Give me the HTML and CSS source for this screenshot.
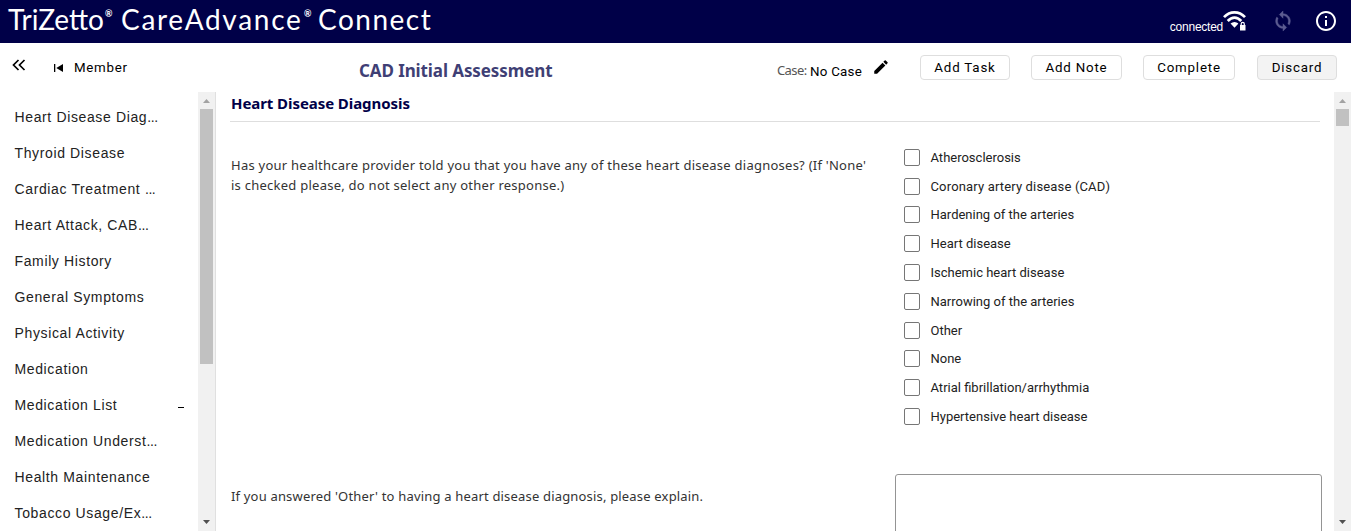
FILE: index.html
```html
<!DOCTYPE html>
<html lang="en">
<head>
<meta charset="utf-8">
<title>CareAdvance Connect</title>
<link rel="stylesheet" href="styles.css">
</head>
<body>
<header class="topbar">
  <div class="brand"><span class="b1">TriZetto</span><sup>®</sup><span class="b2">CareAdvance</span><sup>®</sup><span class="b3">Connect</span></div>
  <div class="status">
    <span class="connected">connected</span>
    <svg class="wifi" width="24" height="22" viewBox="0 0 24 22" fill="none" stroke="#fff" stroke-width="2.7"><path d="M1 7.2C7 .7 16 .7 22 7.2M4.700 11C9 6.500 14 6.500 18.300 11"/><path d="M7.500 13.500Q11.500 10.300 15.500 13.500L11.500 17.700Z" fill="#fff" stroke="none"/><path d="M15.500 13h8v8h-8z" fill="#000048" stroke="none"/><path d="M17 15h5.500v5.500H17z" fill="#fff" stroke="none"/><path d="M18.200 15.500v-1.500a1.550 1.550 0 0 1 3.100 0v1.500" stroke-width="1.200"/></svg>
    <svg class="sync" width="22" height="22" viewBox="0 0 24 24" fill="#5c5c91" stroke="#5c5c91" stroke-width=".5"><path d="M12 4V1L8 5l4 4V6c3.310 0 6 2.690 6 6 0 1.010-.25 1.970-.7 2.800l1.460 1.460C19.540 15.030 20 13.570 20 12c0-4.420-3.580-8-8-8zm0 14c-3.310 0-6-2.690-6-6 0-1.010.25-1.970.7-2.800L5.240 7.740C4.460 8.970 4 10.430 4 12c0 4.420 3.580 8 8 8v3l4-4-4-4v3z"/></svg>
    <svg class="info" width="24" height="24" viewBox="0 0 24 24" fill="#fff"><path d="M11 7h2v2h-2zm0 4h2v6h-2zm1-9C6.480 2 2 6.480 2 12s4.480 10 10 10 10-4.480 10-10S17.520 2 12 2zm0 18c-4.410 0-8-3.590-8-8s3.590-8 8-8 8 3.590 8 8-3.590 8-8 8z"/></svg>
  </div>
</header>
<div class="toolbar">
  <svg class="collapse" width="14" height="12" viewBox="0 0 14 12" fill="none" stroke="#000" stroke-width="1.700"><path d="M6.500 1 1.500 6l5 5M12.500 1l-5 5 5 5"/></svg>
  <svg class="first" width="9" height="8" viewBox="0 0 9 8"><path d="M0 0h1.300v8H0zM9 0v8L2.300 4z"/></svg>
  <span class="member">Member</span>
  <h1 class="title">CAD Initial Assessment</h1>
  <span class="caselabel">Case:</span><span class="casename">No Case</span>
  <svg class="pencil" width="18" height="18" viewBox="0 0 24 24"><path d="M3 17.250V21h3.750L17.810 9.940l-3.750-3.750L3 17.250zM20.710 7.040a.996.996 0 0 0 0-1.410l-2.340-2.340a.996.996 0 0 0-1.410 0l-1.830 1.830 3.750 3.750 1.830-1.830z"/></svg>
  <div class="actions">
    <button class="btn w90">Add Task</button>
    <button class="btn w91">Add Note</button>
    <button class="btn w92">Complete</button>
    <button class="btn discard">Discard</button>
  </div>
</div>
<div class="body">
  <nav class="sidebar">
    <ul class="menu">
      <li><span>Heart Disease Diag<span class="dots">...</span></span></li>
      <li>Thyroid Disease</li>
      <li><span>Cardiac Treatment <span class="dots">...</span></span></li>
      <li><span>Heart Attack, CAB<span class="dots">...</span></span></li>
      <li>Family History</li>
      <li>General Symptoms</li>
      <li>Physical Activity</li>
      <li>Medication</li>
      <li>Medication List<i class="minus"></i></li>
      <li><span>Medication Underst<span class="dots">...</span></span></li>
      <li>Health Maintenance</li>
      <li><span>Tobacco Usage/Ex<span class="dots">...</span></span></li>
    </ul>
    <div class="scroll">
      <svg width="7" height="4" viewBox="0 0 7 4" fill="#a3a3a3"><path d="M3.500 0 7 4H0z"/></svg>
      <div class="thumb long"></div>
      <svg class="down" width="7" height="4" viewBox="0 0 7 4" fill="#505050"><path d="M0 0h7L3.500 4z"/></svg>
    </div>
  </nav>
  <main class="content">
    <h2 class="section">Heart Disease Diagnosis</h2>
    <div class="question">
      <p class="text">Has your healthcare provider told you that you have any of these heart disease diagnoses? (If 'None'<br>is checked please, do not select any other response.)</p>
      <div class="options">
        <label><input type="checkbox"><span>Atherosclerosis</span></label>
        <label><input type="checkbox"><span class="wide">Coronary artery disease (CAD)</span></label>
        <label><input type="checkbox"><span>Hardening of the arteries</span></label>
        <label><input type="checkbox"><span>Heart disease</span></label>
        <label><input type="checkbox"><span>Ischemic heart disease</span></label>
        <label><input type="checkbox"><span>Narrowing of the arteries</span></label>
        <label><input type="checkbox"><span>Other</span></label>
        <label><input type="checkbox"><span>None</span></label>
        <label><input type="checkbox"><span>Atrial fibrillation/arrhythmia</span></label>
        <label><input type="checkbox"><span>Hypertensive heart disease</span></label>
      </div>
    </div>
    <div class="question explain">
      <p class="text tight">If you answered 'Other' to having a heart disease diagnosis, please explain.</p>
      <textarea class="answer"></textarea>
    </div>
  </main>
  <div class="scroll page">
    <svg width="7" height="4" viewBox="0 0 7 4" fill="#a3a3a3"><path d="M3.500 0 7 4H0z"/></svg>
    <div class="thumb short"></div>
    <svg class="down" width="7" height="4" viewBox="0 0 7 4" fill="#505050"><path d="M0 0h7L3.500 4z"/></svg>
  </div>
</div>
</body>
</html>
```
FILE: styles.css
```css
* { box-sizing: border-box; }
html, body { height: 100%; }
body { margin: 0; height: 531px; overflow: hidden; display: flex; flex-direction: column; background: #fff; color: #000; font-family: Roboto, "Liberation Sans", sans-serif; }
svg { flex: none; display: block; }
.topbar { height: 43px; flex: none; background: #000048; color: #fff; display: flex; justify-content: space-between; padding: 0 13px 0 8px; }
.brand { display: flex; font: 400 28px/39px Lato, sans-serif; white-space: nowrap; }
.brand sup { font: 700 9px/9px Lato, sans-serif; padding-top: 9px; width: 8px; margin-right: 8px; }
.b1 { letter-spacing: 0; width: 97px; }
.b2 { letter-spacing: 1.7px; width: 180px; margin-right: 3px; }
.b3 { letter-spacing: 1.5px; margin-left: -2px; }
.status { display: flex; align-items: flex-start; }
.connected { font: 12px/14px "Liberation Sans", sans-serif; letter-spacing: -.25px; margin-top: 20px; }
.wifi { margin-top: 10px; }
.sync { margin: 10px 0 0 25px; }
.info { margin: 9px 0 0 20px; }
.toolbar { height: 49px; flex: none; display: flex; padding: 0 14px 0 12px; white-space: nowrap; }
.collapse { margin-top: 16px; }
.first { margin: 21px 0 0 28px; }
.member { margin: 16px 0 0 11px; width: 285px; font-size: 13.33px; line-height: 17px; letter-spacing: .7px; }
.title { margin: 16px 0 0; width: 418px; font: 700 17px/24px "Noto Sans", sans-serif; color: #3f3f75; letter-spacing: -.1px; }
.caselabel { margin-top: 19px; width: 33px; font: 13px/17px "Noto Sans", sans-serif; letter-spacing: -.6px; color: #555; }
.casename { margin-top: 20px; width: 62px; font-size: 13.33px; line-height: 17px; letter-spacing: .25px; }
.pencil { margin-top: 15px; }
.actions { display: flex; margin: 12px 0 0 auto; }
.btn { height: 25px; padding: 0; border: 1px solid #dedede; border-radius: 4px; background: #fff; font: 13.33px/17px Roboto, sans-serif; letter-spacing: .8px; color: #000; }
.w90 { width: 90px; margin-right: 21px; }
.w91 { width: 91px; margin-right: 21px; }
.w92 { width: 92px; margin-right: 22px; }
.discard { width: 80px; background: #f3f3f3; }
.body { flex: 1; min-height: 0; display: flex; }
.sidebar { width: 216px; flex: none; display: flex; justify-content: space-between; border-right: 1px solid #e0e0e0; }
.menu { margin: 0; padding: 7px 0 0 14.5px; list-style: none; width: 185px; }
.menu li { height: 36px; display: flex; align-items: center; justify-content: space-between; font: 14px/36px "Liberation Sans", sans-serif; letter-spacing: .63px; color: #222; white-space: nowrap; }
.dots { letter-spacing: -.4px; }
.minus { width: 6px; height: 1px; margin: 5px 1px 0 0; background: #000; }
.scroll { width: 17px; flex: none; display: flex; flex-direction: column; align-items: center; padding: 7px 0; background: #f1f1f1; }
.thumb { width: 13px; margin-top: 6px; background: #c1c1c1; }
.long { height: 255px; }
.short { height: 17px; }
.down { margin-top: auto; }
.content { flex: 1; min-width: 0; padding-left: 14px; overflow: hidden; }
.section { margin: 0 14px 0 0; height: 30px; padding-left: 1px; border-bottom: 1px solid #dedede; font: 700 15px/22px "Noto Sans", sans-serif; letter-spacing: -.07px; color: #000048; }
.question { display: flex; }
.text { margin: 33px 0 0 1px; width: 664px; flex: none; font: 13px/20px "Noto Sans", sans-serif; letter-spacing: .25px; color: #333; white-space: nowrap; }
.options { padding: 21px 0 0 9px; }
.options label { display: flex; align-items: center; height: 28.8px; font-size: 13px; color: #222; }
.options input { appearance: none; width: 16px; height: 17px; margin: 0 10.5px 0 0; border: 1px solid #767676; border-radius: 2px; background: #fff; }
.wide { letter-spacing: .16px; }
.explain { margin-top: 42px; }
.explain .text { margin-top: 13px; }
.text.tight { letter-spacing: .18px; }
.answer { width: 427px; height: 80px; flex: none; margin-top: 1px; border: 1px solid #949494; border-radius: 3px; resize: none; background: #fff; }
```
